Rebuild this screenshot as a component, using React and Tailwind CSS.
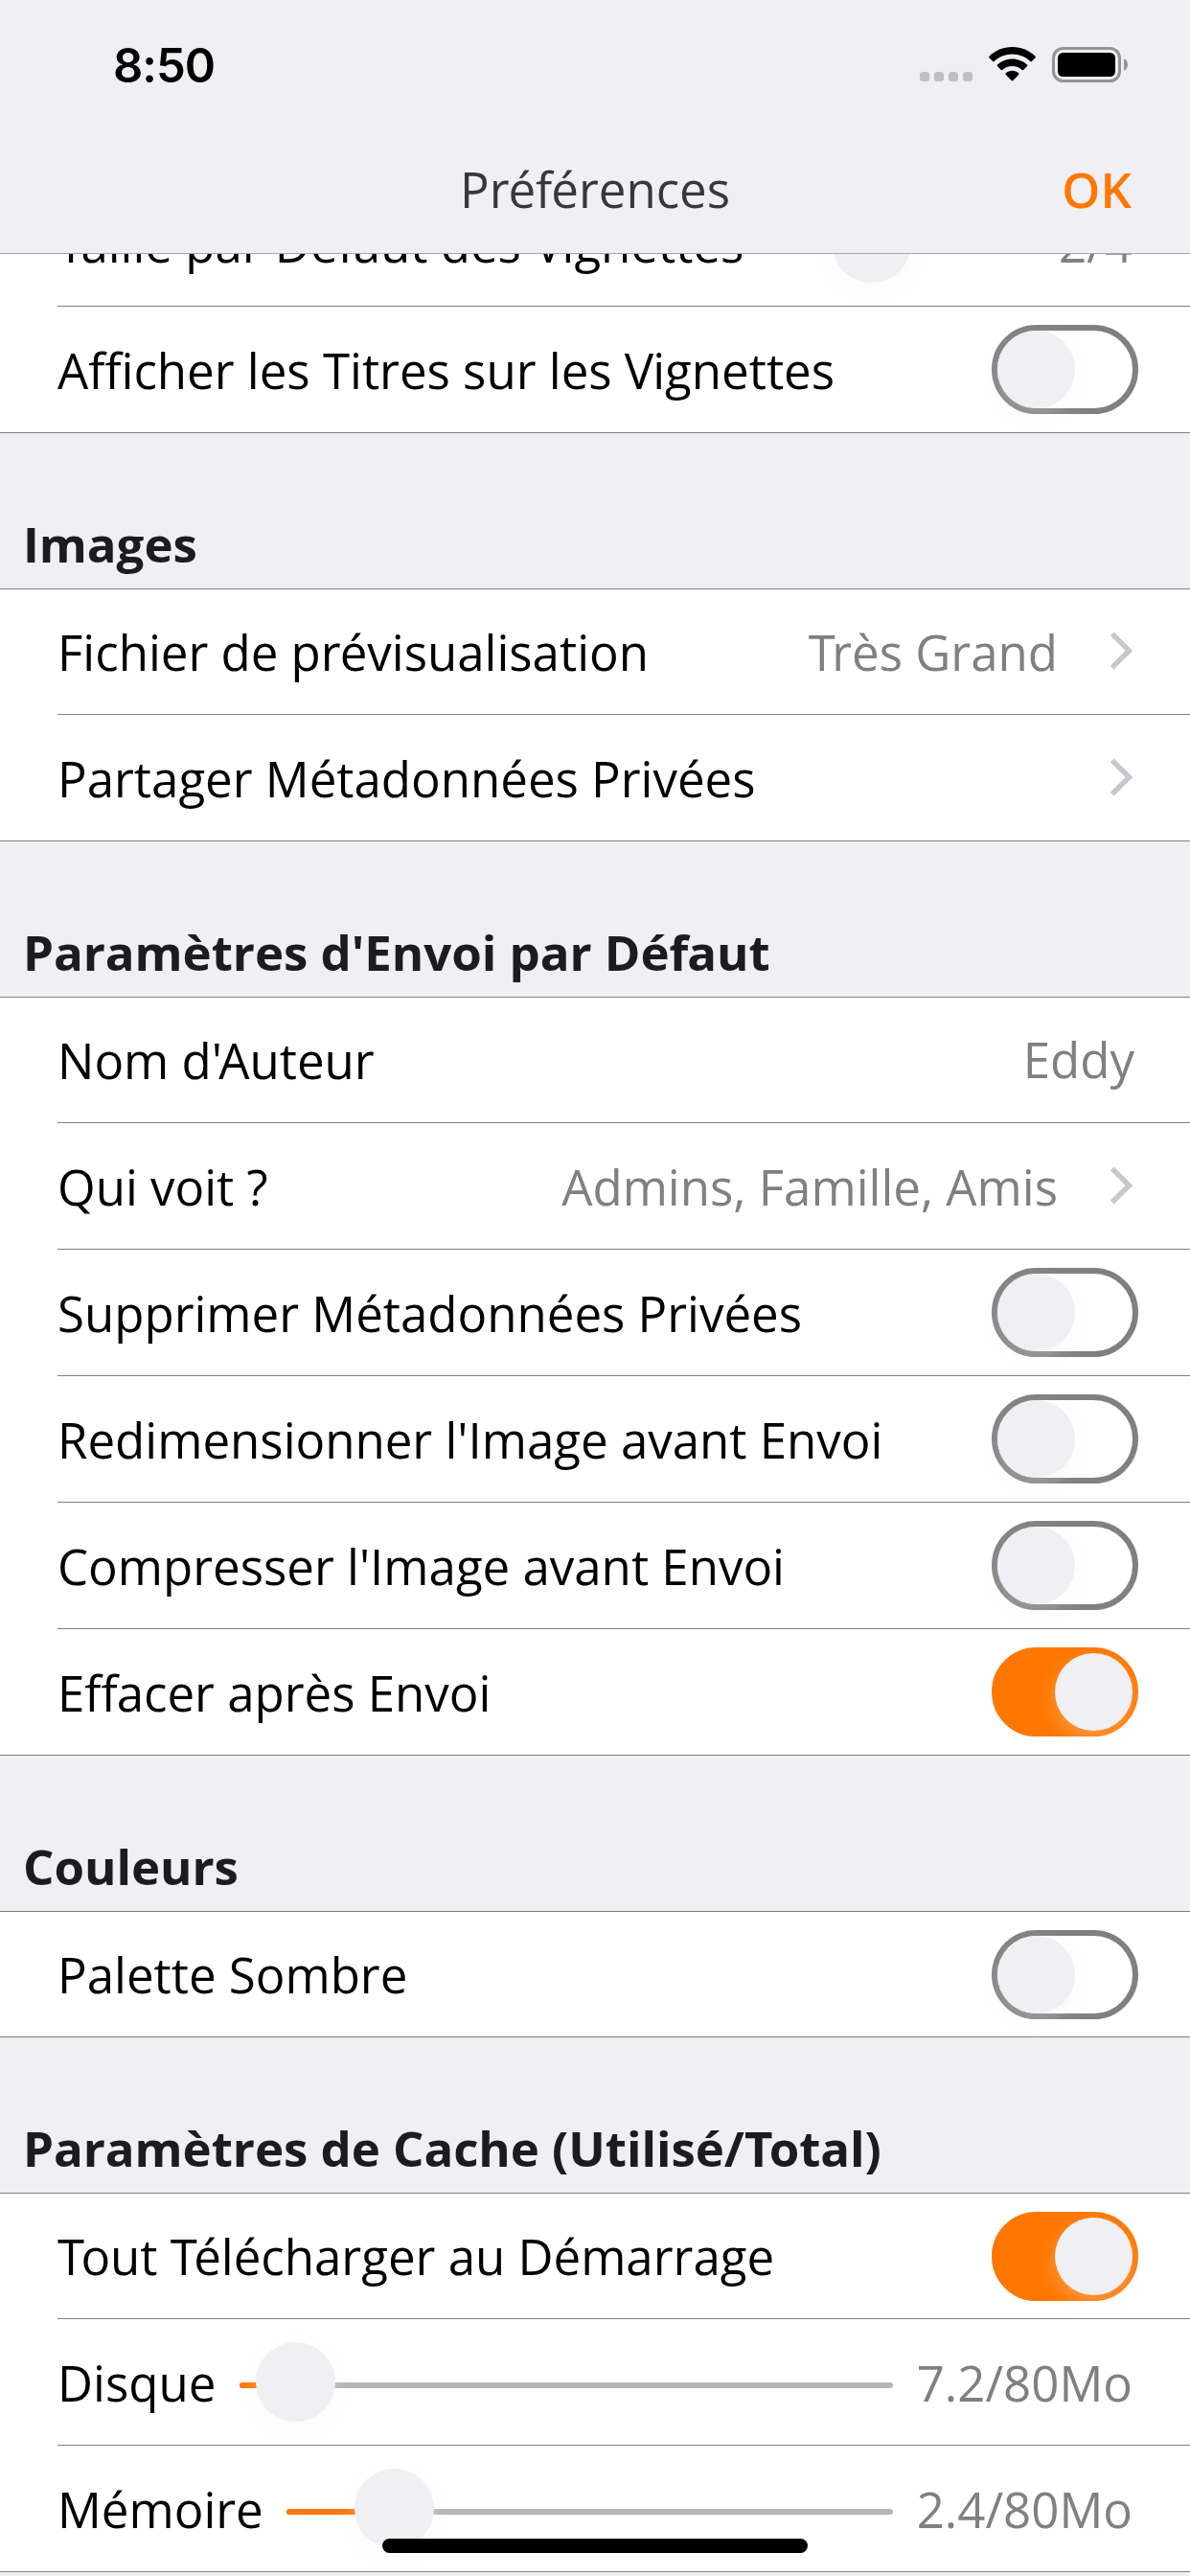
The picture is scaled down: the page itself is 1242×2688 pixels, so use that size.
import React from "react";

const THUMB_SHADOW = "shadow-[0_8px_20px_rgba(239,239,244,0.28)]";

// Letter pairs that are set tighter than the font's own metrics.
const WIDE_PAIRS = /(T(?=[oéra])|'(?=A)|r(?=é)|f(?=[éa])|V(?=i))/;

function Kerned({ text }) {
  return (
    <span className="whitespace-pre">
      {text.split(/(T(?=[oéra])|'(?=A)|r(?=é)|f(?=[éa])|V(?=i))/).map((part, i) => {
        if (i % 2 === 0) return part;
        const tight = part === "T" || part === "'";
        return (
          <span key={i} className={tight ? "tracking-[-3.7px]" : "tracking-[-1px]"}>
            {part}
          </span>
        );
      })}
    </span>
  );
}

function Text({ children }) {
  return WIDE_PAIRS.test(children) ? <Kerned text={children} /> : <span className="whitespace-pre">{children}</span>;
}

function Toggle({ on }) {
  return (
    <span
      className={
        "ml-auto mr-[54px] flex h-[93px] w-[153px] shrink-0 items-center rounded-full border-[6px] " +
        (on ? "justify-end border-[#ff7700] bg-[#ff7700]" : "justify-start border-[#808080] bg-white")
      }
    >
      <span className={"size-[81px] rounded-full bg-[#efeff4] " + THUMB_SHADOW} />
    </span>
  );
}

function Chevron() {
  return (
    <svg className="mr-[58px] ml-[54px] h-[40px] w-[26px] shrink-0 -translate-y-px" viewBox="0 0 26 40" fill="none">
      <path d="M2.7 2.4 20.5 20 2.7 37.6" stroke="#c7c7cc" strokeWidth="5.4" />
    </svg>
  );
}

function Slider({ width, thumb }) {
  return (
    <span className="relative ml-auto flex h-[83px] shrink-0 items-center" style={{ width }}>
      <span className="mt-[7px] flex h-[6px] w-full overflow-hidden rounded-full bg-[#b6b6b6]">
        <span className="h-full bg-[#ff7700]" style={{ width: thumb + 40 }} />
      </span>
      <span
        className={"absolute top-0 size-[83px] rounded-full bg-[#efeff4] " + THUMB_SHADOW}
        style={{ left: thumb }}
      />
    </span>
  );
}

function Row({ label, value, link, toggle, slider, first, last }) {
  return (
    <div className={"bg-white " + (last ? "border-b border-[#808080]" : "")}>
      <div
        className={
          "ml-[60px] flex items-center " +
          (first ? "h-[130px] " : "h-[131px] ") +
          (last ? "" : "box-content border-b border-[#808080]")
        }
      >
        <span className="text-black">
          <Text>{label}</Text>
        </span>
        {slider && <Slider {...slider} />}
        {value && (
          <span
            className={
              "text-right text-[#808080] " +
              (link ? "ml-auto" : slider ? "mr-[60px] w-[250px]" : "ml-auto mr-[58px] -translate-y-px")
            }
          >
            <Text>{value}</Text>
          </span>
        )}
        {link && (value ? <Chevron /> : <span className="ml-auto"><Chevron /></span>)}
        {toggle !== undefined && <Toggle on={toggle} />}
      </div>
    </div>
  );
}

function Section({ title, rows }) {
  return (
    <section>
      <h2 className="flex h-[163px] items-end border-b border-[#808080] pb-[12px] pl-[24px] font-bold tracking-[-0.05px] text-[#1c1c1e]">
        <Text>{title}</Text>
      </h2>
      {rows.map((row, i) => (
        <Row key={row.label} {...row} first={i === 0} last={i === rows.length - 1} />
      ))}
    </section>
  );
}

const SECTIONS = [
  {
    title: "Images",
    rows: [
      { label: "Fichier de prévisualisation", value: "Très Grand", link: true },
      { label: "Partager Métadonnées Privées", link: true },
    ],
  },
  {
    title: "Paramètres d'Envoi par Défaut",
    rows: [
      { label: "Nom d'Auteur", value: "Eddy" },
      { label: "Qui voit ?", value: "Admins, Famille, Amis", link: true },
      { label: "Supprimer Métadonnées Privées", toggle: false },
      { label: "Redimensionner l'Image avant Envoi", toggle: false },
      { label: "Compresser l'Image avant Envoi", toggle: false },
      { label: "Effacer après Envoi", toggle: true },
    ],
  },
  { title: "Couleurs", rows: [{ label: "Palette Sombre", toggle: false }] },
  {
    title: "Paramètres de Cache (Utilisé/Total)",
    rows: [
      { label: "Tout Télécharger au Démarrage", toggle: true },
      { label: "Disque", value: "7.2/80Mo", slider: { width: 682, thumb: 17 } },
      { label: "Mémoire", value: "2.4/80Mo", slider: { width: 633, thumb: 71 } },
    ],
  },
];

function StatusBar() {
  return (
    <div className="flex h-[132px] items-start justify-between pl-[118px] pr-[64px]">
      <span className="mt-[39px] font-['Inter',sans-serif] text-[49px] leading-[60px] font-semibold tracking-[-1px] text-black">
        8:50
      </span>
      <div className="mt-[49px] flex items-start">
        <div className="mt-[26px] flex gap-[5px]">
          {[0, 1, 2, 3].map((i) => (
            <span key={i} className="size-[10px] rounded-[3px] bg-[#c0c0c3]" />
          ))}
        </div>
        <svg className="ml-[17px] h-[36px] w-[49px]" viewBox="0 0 49 36">
          <path d="M24.5 0C34 0 42.4 3.7 48.6 9.7Q49.3 10.5 48.6 11.3L44.9 15Q44.1 15.7 43.3 15C38.4 10.3 31.8 7.5 24.5 7.5S10.6 10.3 5.7 15Q4.9 15.7 4.1 15L.4 11.3Q-.3 10.5.4 9.7C6.6 3.7 15 0 24.5 0Z" />
          <path d="M24.5 12.4C30.5 12.4 35.9 14.7 40 18.5Q40.8 19.3 40 20.1L36.2 23.9Q35.5 24.6 34.7 23.9C32 21.4 28.4 19.9 24.5 19.9S17 21.4 14.3 23.9Q13.5 24.6 12.8 23.9L9 20.1Q8.2 19.3 9 18.5C13.1 14.7 18.5 12.4 24.5 12.4Z" />
          <path d="M24.5 24.8C27 24.8 29.3 25.7 31.2 27.3Q32 28.1 31.2 28.9L25.3 35Q24.5 35.8 23.7 35L17.8 28.9Q17 28.1 17.8 27.3C19.7 25.7 22 24.8 24.5 24.8Z" />
        </svg>
        <svg className="ml-[17px] h-[37px] w-[80px]" viewBox="0 0 80 37">
          <rect x="1.5" y="1.5" width="69" height="34" rx="10" fill="none" stroke="#949497" strokeWidth="3" />
          <rect x="6" y="6" width="60" height="25" rx="5.5" />
          <path d="M75 12.2C77.5 13.2 79 15.6 79 18.5S77.5 23.8 75 24.8Z" fill="#949497" />
        </svg>
      </div>
    </div>
  );
}

export default function App() {
  return (
    <div className="relative flex h-[2688px] w-[1242px] flex-col overflow-hidden bg-[#efeff4] font-['Open_Sans','Noto_Sans',sans-serif] text-[51px] leading-[70px]">
      <header className="h-[265px] shrink-0 border-b border-[#a9a9ad] bg-[#efeff4]">
        <StatusBar />
        <div className="grid h-[129px] grid-cols-[1fr_auto_1fr] items-center">
          <h1 className="col-start-2 text-[#38383a]">
            <Text>Préférences</Text>
          </h1>
          <span className="mr-[61px] justify-self-end font-semibold text-[#ff7700]">OK</span>
        </div>
      </header>
      <main className="min-h-0 flex-1 overflow-hidden">
        <div className="-mt-[77px]">
          <Row label="Taille par Défaut des Vignettes" value="2/4" slider={{ width: 110, thumb: 46 }} />
          <Row label="Afficher les Titres sur les Vignettes" toggle={false} last />
        </div>
        {SECTIONS.map((s) => (
          <Section key={s.title} {...s} />
        ))}
      </main>
      <div className="absolute bottom-[24px] left-[399px] h-[15px] w-[444px] rounded-full bg-black" />
    </div>
  );
}
